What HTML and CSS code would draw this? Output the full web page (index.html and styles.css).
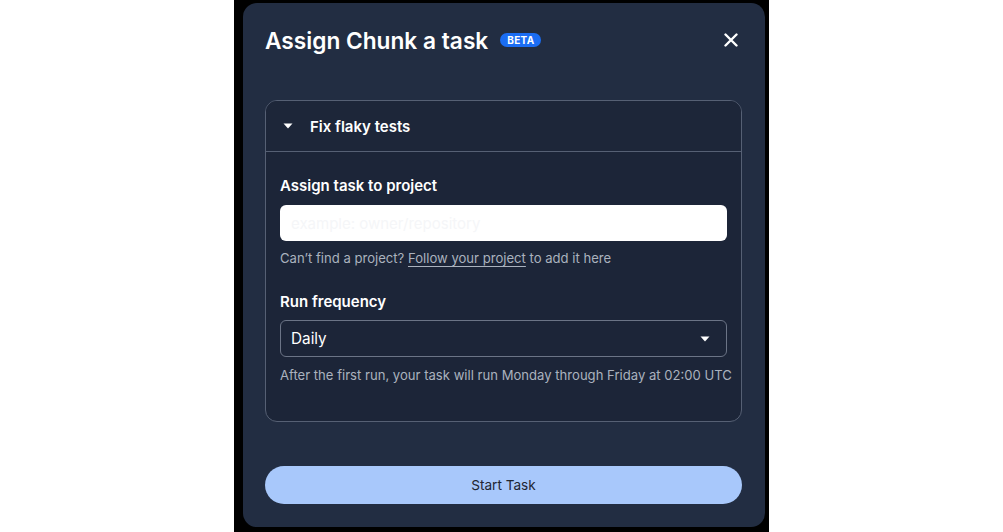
FILE: index.html
```html
<!DOCTYPE html>
<html lang="en">
<head>
<meta charset="utf-8">
<title>Assign Chunk a task</title>
<link rel="stylesheet" href="styles.css">
</head>
<body>
<div class="frame">
  <div class="modal">
    <div class="modal-head">
      <h1 class="title">Assign Chunk a task</h1>
      <span class="badge">BETA</span>
      <button class="close" aria-label="Close">
        <svg width="14" height="14" viewBox="0 0 14 14"><path d="M1.5 1.5 L12.5 12.5 M12.5 1.5 L1.5 12.5" stroke="#fff" stroke-width="2.4" stroke-linecap="round"/></svg>
      </button>
    </div>
    <div class="card">
      <div class="card-head">
        <svg class="caret" width="10" height="6" viewBox="0 0 10 6"><path d="M0.5 0.5 H9.5 L5 5.5 Z" fill="#fff"/></svg>
        <span class="card-title">Fix flaky tests</span>
      </div>
      <div class="card-body">
        <div class="label">Assign task to project</div>
        <div class="input"><span class="placeholder">example: owner/repository</span></div>
        <div class="help">Can’t find a project? <span class="link">Follow your project</span> to add it here</div>
        <div class="label label-2">Run frequency</div>
        <div class="select">
          <span>Daily</span>
          <svg width="10" height="6" viewBox="0 0 10 6"><path d="M0.5 0.5 H9.5 L5 5.5 Z" fill="#fff"/></svg>
        </div>
        <div class="help help-2">After the first run, your task will run Monday through Friday at 02:00 UTC</div>
      </div>
    </div>
    <button class="start">Start Task</button>
  </div>
</div>
</body>
</html>
```
FILE: styles.css
```css
html, body {
  margin: 0;
  padding: 0;
  background: #ffffff;
  font-family: Inter, "Noto Sans", sans-serif;
}
.frame {
  width: 535px;
  height: 532px;
  margin: 0 auto;
  background: #000;
  box-sizing: border-box;
  padding: 3px 4px 5px 9px;
}
.modal {
  height: 524px;
  box-sizing: border-box;
  background: #222d42;
  border-radius: 14px;
  padding: 17px 23px 0 22px;
  display: flex;
  flex-direction: column;
}
.modal-head {
  display: flex;
  align-items: center;
  height: 40px;
}
.title {
  margin: 0;
  font-size: 22.7px;
  font-weight: 600;
  color: #ffffff;
}
.badge {
  margin-left: 12px;
  background: #1b6df3;
  color: #fff;
  font-size: 10px;
  font-weight: 700;
  letter-spacing: 0.3px;
  height: 14px;
  line-height: 14px;
  padding: 0 7px;
  border-radius: 7px;
}
.close {
  margin-left: auto;
  margin-right: 4px;
  background: none;
  border: 0;
  padding: 0;
  width: 14px;
  height: 14px;
  display: flex;
}
.card {
  margin-top: 40px;
  border: 1px solid #566074;
  border-radius: 12px;
  background: #1c2538;
  overflow: hidden;
}
.card-head {
  height: 50px;
  border-bottom: 1px solid #566074;
  display: flex;
  align-items: center;
  padding-left: 17px;
  background: #1d2639;
}
.caret {
  margin-right: 17px;
}
.card-title {
  color: #fff;
  font-size: 15px;
  font-weight: 600;
}
.card-body {
  padding: 22px 14px 36px 14px;
}
.label {
  color: #fff;
  font-size: 15px;
  font-weight: 600;
  line-height: 24px;
}
.label-2 {
  margin-top: 22px;
}
.input {
  margin-top: 7px;
  height: 36px;
  background: #fff;
  border-radius: 6px;
  display: flex;
  align-items: center;
  padding-left: 11px;
}
.placeholder {
  color: #f5f6f8;
  font-size: 15px;
}
.help {
  margin-top: 7px;
  color: #aab2be;
  font-size: 13.1px;
  line-height: 20px;
  white-space: nowrap;
}
.help-2 {
  margin-top: 8px;
}
.link {
  text-decoration: underline;
  text-underline-offset: 3px;
}
.select {
  margin-top: 6px;
  height: 37px;
  box-sizing: border-box;
  border: 1px solid #6b7486;
  border-radius: 6px;
  display: flex;
  align-items: center;
  justify-content: space-between;
  padding: 0 16px 0 10px;
  color: #fff;
  font-size: 15.3px;
}
.start {
  margin-top: 44px;
  height: 38px;
  border: 0;
  border-radius: 19px;
  background: #a8c8fb;
  color: #1f2633;
  font-family: Inter, "Noto Sans", sans-serif;
  font-size: 13.6px;
}
```
